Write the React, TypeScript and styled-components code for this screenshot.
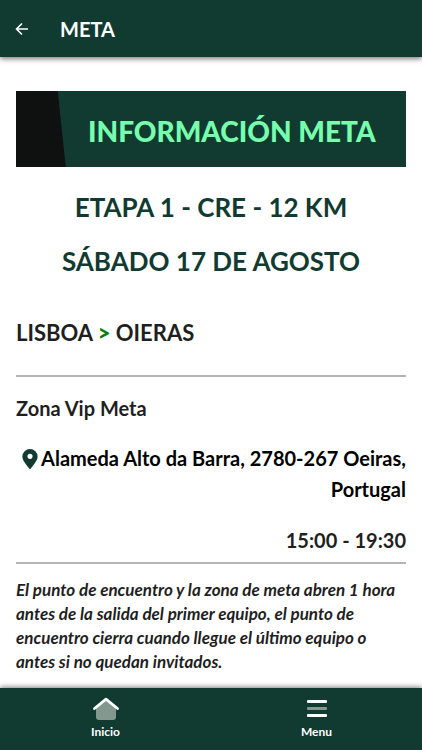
import React from "react";
import styled, { createGlobalStyle } from "styled-components";

const green = "#113b31";
const ink = "#1f1f1f";

const GlobalStyle = createGlobalStyle`
  *, *::before, *::after { box-sizing: border-box; }
  body {
    margin: 0;
    background: #fff;
    color: ${ink};
    font-family: Lato, "Open Sans", sans-serif;
  }
`;

const Page = styled.div`
  display: flex;
  flex-direction: column;
  height: 100vh;
`;

const TopBar = styled.header`
  display: flex;
  flex: none;
  align-items: center;
  gap: 24px;
  height: 57px;
  padding: 0 8px;
  background: ${green};
  color: #fff;
  box-shadow: 0 2px 5px rgba(0, 0, 0, 0.5);
  z-index: 1;
`;

const BackButton = styled.button`
  display: flex;
  padding: 6px;
  border: 0;
  background: none;
  color: inherit;
  cursor: pointer;
`;

const Title = styled.h1`
  margin: 0;
  font-size: 20px;
  line-height: 28px;
  font-weight: 700;
`;

const Content = styled.main`
  flex: 1;
  min-height: 0;
  overflow: hidden auto;
  padding: 34px 16px 16px;
  scrollbar-width: none;
`;

const Banner = styled.h2`
  margin: 0;
  padding: 22px 32px 18px 72px;
  background: linear-gradient(84deg, #0f1010 49px, ${green} 50px);
  color: #77ffad;
  font-size: 28px;
  line-height: 36px;
  font-weight: 900;
  text-align: center;
  white-space: nowrap;
`;

const StageHeading = styled.h2`
  margin: 0 0 22px;
  color: ${green};
  font-size: 26px;
  line-height: 32px;
  font-weight: 700;
  text-align: center;

  ${Banner} + & { margin-top: 24px; }
`;

const Route = styled.h3`
  margin: 40px 0 26px;
  font-size: 22px;
  line-height: 32px;
  font-weight: 700;

  span {
    color: #008000;
    font-weight: 900;
  }
`;

const Divider = styled.hr`
  height: 2px;
  margin: 0;
  border: 0;
  background: #b4b5b4;
`;

const ZoneTitle = styled.h4`
  margin: 16px 0 20px;
  font-size: 20px;
  line-height: 30px;
  font-weight: 700;
`;

const Address = styled.a`
  display: block;
  color: #000;
  font-size: 20px;
  line-height: 31px;
  font-weight: 700;
  text-align: right;
  text-decoration: none;

  svg {
    margin-right: 3px;
    vertical-align: -3px;
  }
`;

const Hours = styled.p`
  margin: 20px 0 7px;
  font-size: 20px;
  line-height: 30px;
  font-weight: 700;
  text-align: right;
`;

const Note = styled.p`
  margin: 14px 0 0;
  font-size: 17px;
  line-height: 24px;
  font-style: italic;
  font-weight: 700;
`;

const TabBar = styled.nav`
  display: grid;
  flex: none;
  grid-template-columns: 1fr 1fr;
  height: 62px;
  background: ${green};
  box-shadow: 0 -1px 5px rgba(0, 0, 0, 0.5);
  z-index: 1;
`;

const Tab = styled.button`
  display: flex;
  flex-direction: column;
  align-items: center;
  gap: 2px;
  padding: 8px 0 0;
  border: 0;
  background: none;
  color: #fff;
  font-family: Lato, "Open Sans", sans-serif;
  font-size: 12px;
  line-height: 16px;
  font-weight: 700;
  cursor: pointer;
`;

const ArrowIcon = () => (
  <svg width="16" height="16" viewBox="0 0 16 16" fill="none" stroke="currentColor" strokeWidth="1.6" aria-hidden="true">
    <path d="M14 8H2.5M8 2.5L2.5 8L8 13.5" />
  </svg>
);

const PinIcon = () => (
  <svg width="16" height="20" viewBox="0 0 16 21" aria-hidden="true">
    <path fill={green} fillRule="evenodd" d="M8 0a8 8 0 0 0-8 8c0 3 1.6 5.5 7.2 12.6a1 1 0 0 0 1.6 0C14.4 13.5 16 11 16 8a8 8 0 0 0-8-8Zm0 5a2.7 2.7 0 1 1 0 5.4A2.7 2.7 0 0 1 8 5Z" />
  </svg>
);

const HomeIcon = () => (
  <svg width="28" height="26" viewBox="0 0 28 26" fill="none" aria-hidden="true">
    <path d="M4 12L14 4L24 12V21Q24 24 21 24H7Q4 24 4 21Z" fill="#83988f" />
    <path d="M2.5 12.5L14 3.2L25.5 12.5" stroke="#fff" strokeWidth="2.8" strokeLinecap="round" strokeLinejoin="round" />
  </svg>
);

const MenuIcon = () => (
  <svg width="28" height="26" viewBox="0 0 28 26" aria-hidden="true">
    <rect x="4" y="4" width="20" height="3" rx="1" fill="#fff" />
    <rect x="4" y="11" width="20" height="3" rx="1" fill="#83988f" />
    <rect x="4" y="18" width="20" height="3" rx="1" fill="#fff" />
  </svg>
);

export default function App() {
  return (
    <>
      <GlobalStyle />
      <Page>
        <TopBar>
          <BackButton type="button" aria-label="Volver">
            <ArrowIcon />
          </BackButton>
          <Title>META</Title>
        </TopBar>
        <Content>
          <Banner>INFORMACIÓN META</Banner>
          <StageHeading>ETAPA 1 - CRE - 12 KM</StageHeading>
          <StageHeading>SÁBADO 17 DE AGOSTO</StageHeading>
          <Route>
            LISBOA <span>&gt;</span> OIERAS
          </Route>
          <Divider />
          <ZoneTitle>Zona Vip Meta</ZoneTitle>
          <Address href="#mapa">
            <PinIcon />
            Alameda Alto da Barra, 2780-267 Oeiras, Portugal
          </Address>
          <Hours>15:00 - 19:30</Hours>
          <Divider />
          <Note>
            El punto de encuentro y la zona de meta abren 1 hora antes de la
            salida del primer equipo, el punto de encuentro cierra cuando llegue
            el último equipo o antes si no quedan invitados.
          </Note>
        </Content>
        <TabBar>
          <Tab type="button">
            <HomeIcon />
            Inicio
          </Tab>
          <Tab type="button">
            <MenuIcon />
            Menu
          </Tab>
        </TabBar>
      </Page>
    </>
  );
}
